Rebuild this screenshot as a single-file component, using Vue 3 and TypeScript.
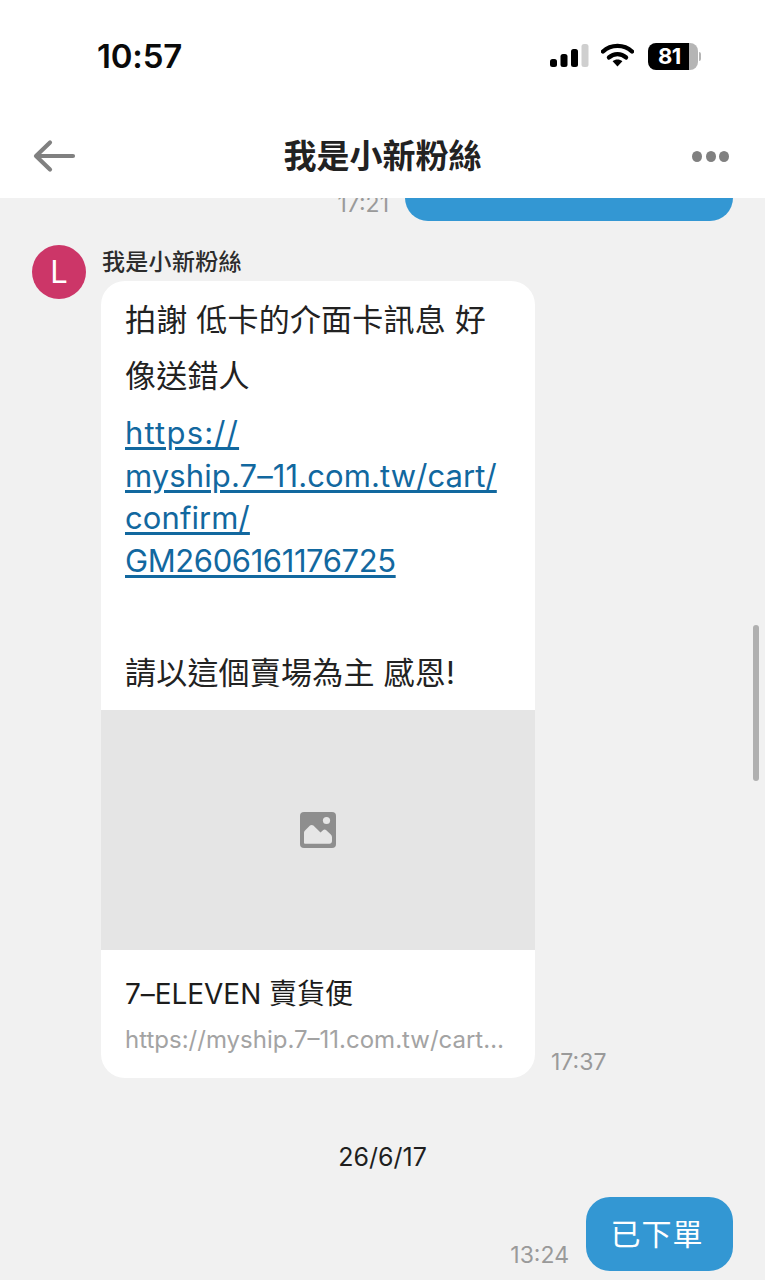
<script setup lang="ts">
const links: string[] = ['https://', 'myship.7–11.com.tw/cart/', 'confirm/', 'GM2606161176725']
</script>

<template>
  <div class="screen">
    <header class="top">
      <div class="status">
        <span class="clock">10:57</span>
        <div class="status-icons">
          <svg class="signal" width="39" height="24" viewBox="0 0 39 24">
            <rect x="0" y="15" width="7" height="8" rx="2.5" fill="#000" />
            <rect x="10.5" y="10" width="7" height="13" rx="2.5" fill="#000" />
            <rect x="21" y="5" width="7" height="18" rx="2.5" fill="#000" />
            <rect x="31.5" y="0" width="7" height="23" rx="2.5" fill="#cfcfcf" />
          </svg>
          <svg class="wifi" width="33" height="24" viewBox="0 0 33 24">
            <path d="M2 8.5C10 1 23 1 31 8.5" fill="none" stroke="#000" stroke-width="4.4" stroke-linecap="round" />
            <path d="M8 14.4C12.8 10 20.2 10 25 14.4" fill="none" stroke="#000" stroke-width="4.4" stroke-linecap="round" />
            <path d="M11.6 18.2L16.5 23.4L21.4 18.2C18.6 15.9 14.4 15.9 11.6 18.2Z" fill="#000" />
          </svg>
          <div class="battery">
            <div class="cell"><span class="level">81</span></div>
            <span class="nub"></span>
          </div>
        </div>
      </div>
      <div class="nav">
        <svg class="back" width="44" height="36" viewBox="0 0 44 36">
          <path d="M41 18H5M18 4.5L4 18L18 31.5" fill="none" stroke="#808080" stroke-width="4.2" stroke-linecap="round" stroke-linejoin="round" />
        </svg>
        <h1 class="title">我是小新粉絲</h1>
        <div class="dots"><i></i><i></i><i></i></div>
      </div>
    </header>

    <main class="chat">
      <div class="sent-row first">
        <span class="time clipped">17:21</span>
        <div class="bubble-cut"></div>
      </div>

      <div class="incoming">
        <div class="avatar">L</div>
        <div class="incoming-body">
          <div class="sender">我是小新粉絲</div>
          <div class="card-row">
            <article class="card">
              <div class="message">
                <p class="lead">拍謝 低卡的介面卡訊息 好像送錯人</p>
                <div class="links">
                  <a v-for="link in links" :key="link" class="link">{{ link }}</a>
                </div>
                <p class="closing">請以這個賣場為主 感恩!</p>
              </div>
              <div class="preview">
                <svg width="36" height="36" viewBox="0 0 36 36">
                  <rect width="36" height="36" rx="4" fill="#8e8e8e" />
                  <circle cx="26.5" cy="8.5" r="3.6" fill="#e6e6e6" />
                  <path d="M4 31V20.5C4 19.6 4.4 19 5 18.4L10 13.6C11 12.7 12.4 12.7 13.4 13.6L20.5 20.4L23 18.2C24 17.3 25.3 17.3 26.3 18.2L30.8 22.6C31.6 23.4 32 24.2 32 25.3V29C32 30.6 31 31.7 29.4 31.7H5C4.4 31.7 4 31.5 4 31Z" fill="#e6e6e6" />
                </svg>
              </div>
              <div class="meta">
                <div class="meta-title">7–ELEVEN 賣貨便</div>
                <div class="meta-url">https://myship.7–11.com.tw/cart/confirm/GM2606161176725</div>
              </div>
            </article>
            <span class="time">17:37</span>
          </div>
        </div>
      </div>

      <div class="date">26/6/17</div>

      <div class="sent-row last">
        <span class="time">13:24</span>
        <div class="bubble">已下單</div>
      </div>

      <div class="scrollbar"></div>
    </main>
  </div>
</template>

<style>
html, body { margin: 0; padding: 0; background: #f1f1f1; }
</style>

<style scoped>
.screen {
  width: 765px;
  height: 1280px;
  overflow: hidden;
  display: flex;
  flex-direction: column;
  background: #f1f1f1;
  font-family: Inter, "Noto Sans CJK TC", sans-serif;
  color: #1c1c1c;
}
.top { height: 198px; flex: none; background: #fff; position: relative; z-index: 1; }
.status {
  height: 112px;
  box-sizing: border-box;
  padding: 36px 64px 0 97px;
  display: flex;
  justify-content: space-between;
  align-items: flex-start;
}
.clock {
  font-family: Inter, sans-serif;
  font-size: 33px;
  line-height: 40px;
  font-weight: 600;
  color: #0a0a0a;
  letter-spacing: -0.2px;
}
.status-icons { display: flex; align-items: center; gap: 12px; height: 40px; }
.signal { margin-top: -1px; margin-left: -1px; }
.wifi { margin-top: -2px; }
.battery { display: flex; align-items: center; gap: 1px; margin-left: 2px; }
.cell {
  width: 50px;
  height: 27px;
  border-radius: 8px;
  background: linear-gradient(90deg, #000 0 82%, #b5b5b5 82% 100%);
  display: flex;
  align-items: center;
  padding-left: 10px;
  box-sizing: border-box;
}
.level {
  color: #fff;
  font-family: Inter, sans-serif;
  font-size: 22px;
  line-height: 27px;
  font-weight: 700;
  letter-spacing: -0.5px;
}
.nub { width: 2px; height: 9px; border-radius: 0 2px 2px 0; background: #b5b5b5; }
.nav {
  height: 86px;
  box-sizing: border-box;
  padding: 0 36px 0 32px;
  display: flex;
  align-items: flex-start;
  justify-content: space-between;
}
.back { margin-top: 26px; }
.title {
  margin: 18px 3px 0 0;
  font-size: 33px;
  line-height: 52px;
  font-weight: 700;
  color: #222;
}
.dots { display: flex; gap: 3.5px; margin-top: 39px; }
.dots i { width: 10px; height: 11px; border-radius: 50%; background: #808080; display: block; }
.chat { flex: 1; position: relative; overflow: hidden; padding: 0 32px; }
.sent-row { display: flex; justify-content: flex-end; align-items: flex-end; }
.first { height: 23px; gap: 16px; }
.bubble-cut {
  width: 328px;
  height: 23px;
  background: #3397d3;
  border-radius: 0 0 24px 24px;
}
.time {
  font-size: 23px;
  line-height: 30px;
  color: #9a9a9a;
  flex: none;
}
.clipped { position: relative; top: -3px; height: 30px; margin-bottom: -1px; }
.incoming { display: flex; gap: 15px; margin-top: 24px; }
.avatar {
  width: 54px;
  height: 54px;
  border-radius: 50%;
  background: #cc3668;
  color: #fff;
  font-size: 31px;
  line-height: 54px;
  text-align: center;
  flex: none;
  font-weight: 400;
}
.sender { font-size: 23px; line-height: 30px; color: #2c2c2c; height: 34px; margin-top: 2px; font-weight: 500; letter-spacing: 0.3px; padding-left: 1px; }
.card-row { display: flex; align-items: flex-end; gap: 16px; }
.card { width: 434px; background: #fff; border-radius: 24px; overflow: hidden; }
.message { padding: 11px 24px 15px; color: #222; }
.lead { margin: 0 0 8px; line-height: 56px; font-size: 31px; letter-spacing: 0.2px; }
.links { display: flex; flex-direction: column; }
.link {
  color: #12689f;
  text-decoration: underline;
  text-underline-offset: 3px;
  line-height: 42.5px;
  font-size: 31px;
  letter-spacing: 0.1px;
  white-space: nowrap;
}
.link:first-child { letter-spacing: 1.2px; }
.link:last-child { letter-spacing: -0.4px; }
.closing { margin: 69px 0 0; line-height: 44px; font-size: 31px; letter-spacing: 0.2px; }
.preview {
  height: 240px;
  background: #e5e5e5;
  display: flex;
  align-items: center;
  justify-content: center;
}
.meta { padding: 25px 24px 20px; }
.meta-title { font-size: 28px; line-height: 38px; color: #1c1c1c; font-weight: 400; letter-spacing: -0.05px; }
.meta-url {
  margin-top: 9px;
  font-size: 24px;
  line-height: 36px;
  color: #a3a3a3;
  white-space: nowrap;
  overflow: hidden;
  text-overflow: ellipsis;
}
.card-row .time { margin-bottom: 1px; }
.date {
  margin-top: 62px;
  text-align: center;
  font-size: 25px;
  line-height: 34px;
  color: #1f1f1f;
}
.last { margin-top: 23px; gap: 17px; }
.last .time { margin-bottom: 1px; }
.bubble {
  width: 147px;
  height: 74px;
  box-sizing: border-box;
  padding-right: 5px;
  border-radius: 24px;
  background: #3397d3;
  color: #fff;
  font-size: 30px;
  line-height: 74px;
  text-align: center;
  letter-spacing: 1px;
}
.scrollbar {
  position: absolute;
  left: 753px;
  top: 427px;
  width: 6px;
  height: 156px;
  border-radius: 3px;
  background: #b0b0b0;
}
</style>
